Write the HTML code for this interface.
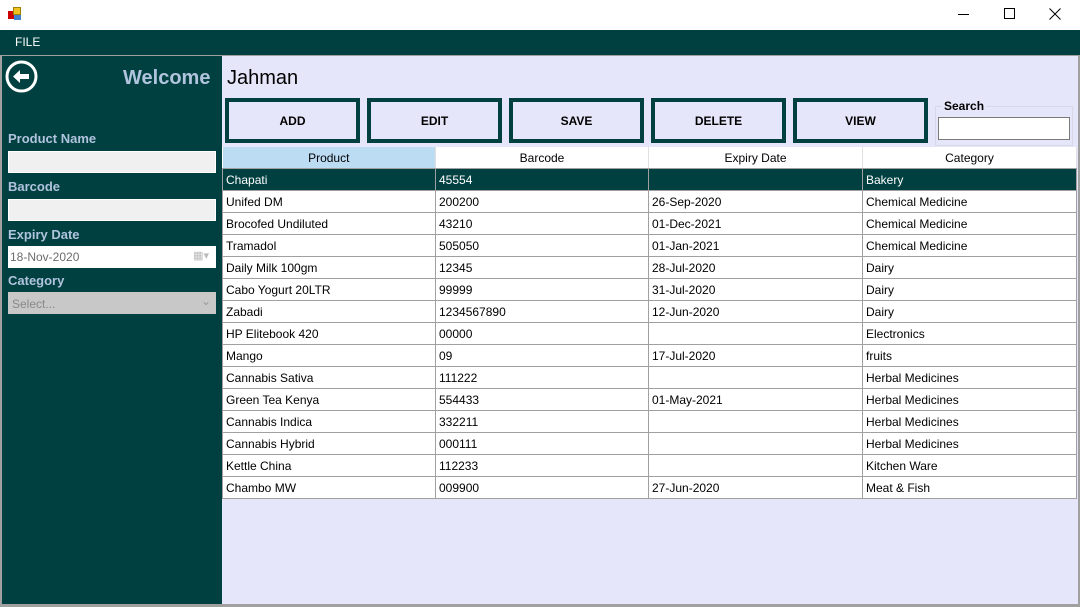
<!DOCTYPE html>
<html><head><style>
*{margin:0;padding:0;box-sizing:border-box}
body{width:1080px;height:607px;position:relative;background:#fff;font-family:"Liberation Sans",sans-serif;overflow:hidden}
.a{position:absolute}
.teal{background:#004040}
.lbl{position:absolute;left:8px;color:#b0c4de;font-weight:bold;font-size:13px}
.box{position:absolute;left:8px;width:208px;height:22px;background:#f0f0f0;border:1px solid #fff}
.btn{position:absolute;top:98px;width:135px;height:45px;border:4px solid #004040;background:#e6e6fa;font-weight:bold;font-size:12px;text-align:center;line-height:38px}
table{position:absolute;left:222px;top:147px;width:854px;border-collapse:collapse;font-size:12px;table-layout:fixed;background:#fff}
td{height:22px;border:1px solid #a0a0a0;padding:1px 3px 0;white-space:nowrap;overflow:hidden}
th{height:21px;font-weight:normal;border-right:1px solid #e0e0e0;border-bottom:1px solid #a0a0a0;background:#fff;padding-top:1px}
tr.sel td{background:#004040;color:#fff}
</style></head><body>
<div class="a" style="left:8px;top:7px;width:14px;height:14px">
<div class="a" style="left:0;top:4px;width:6px;height:8px;background:#c00"></div>
<div class="a" style="left:5px;top:0;width:8px;height:8px;background:#f0c020;border:1px solid #a08000"></div>
<div class="a" style="left:6px;top:8px;width:7px;height:5px;background:#4080d0"></div></div>
<div class="a" style="left:958px;top:14px;width:11px;height:1px;background:#000"></div>
<div class="a" style="left:1004px;top:8px;width:11px;height:11px;border:1px solid #000"></div>
<svg class="a" style="left:1049px;top:8px" width="12" height="12"><path d="M0.5 0.5L11.5 11.5M11.5 0.5L0.5 11.5" stroke="#000" stroke-width="1"/></svg>
<div class="a teal" style="left:0;top:30px;width:1080px;height:25px"></div>
<div class="a" style="left:15px;top:35px;color:#fff;font-size:12px">FILE</div>
<div class="a" style="left:0;top:55px;width:1080px;height:552px;background:#a0a0a0"></div>
<div class="a teal" style="left:2px;top:56px;width:220px;height:548px"></div>
<div class="a" style="left:222px;top:56px;width:856px;height:548px;background:#e6e6fa"></div>
<svg class="a" style="left:5px;top:60px" width="33" height="33" viewBox="0 0 33 33"><circle cx="16.5" cy="16.5" r="14.5" fill="none" stroke="#fff" stroke-width="3"/><path d="M8 16.5 L15 10 V14 H24 V19 H15 V23 Z" fill="#fff"/></svg>
<div class="a" style="left:123px;top:67px;color:#b0c4de;font-weight:bold;font-size:20px">Welcome</div>
<div class="lbl" style="top:131px">Product Name</div>
<div class="box" style="top:151px"></div>
<div class="lbl" style="top:179px">Barcode</div>
<div class="box" style="top:199px"></div>
<div class="lbl" style="top:227px">Expiry Date</div>
<div class="box" style="top:246px;background:#fff;font-size:12px;color:#6d6d6d;padding:3px 0 0 1px">18-Nov-2020<span style="position:absolute;right:6px;top:2px;color:#bbb;font-size:11px">▦▾</span></div>
<div class="lbl" style="top:273px">Category</div>
<div class="box" style="top:292px;background:#c8c8c8;border-color:#c8c8c8;font-size:12px;color:#888;padding:4px 0 0 3px">Select...<span style="position:absolute;right:4px;top:1px;color:#999">⌄</span></div>
<div class="a" style="left:227px;top:67px;font-size:20px;color:#000">Jahman</div>
<div class="btn" style="left:225px">ADD</div>
<div class="btn" style="left:367px">EDIT</div>
<div class="btn" style="left:509px">SAVE</div>
<div class="btn" style="left:651px">DELETE</div>
<div class="btn" style="left:793px">VIEW</div>
<div class="a" style="left:935px;top:106px;width:138px;height:40px;border:1px solid #d8d8e8"></div>
<div class="a" style="left:942px;top:99px;font-size:12px;font-weight:bold;background:#e6e6fa;padding:0 2px">Search</div>
<div class="a" style="left:938px;top:117px;width:132px;height:23px;background:#fff;border:1px solid #7a7a7a"></div>
<table>
<colgroup><col style="width:213px"><col style="width:213px"><col style="width:214px"><col style="width:214px"></colgroup>
<tr><th style="background:#bcdcf4">Product</th><th>Barcode</th><th>Expiry Date</th><th>Category</th></tr>
<tr class="sel"><td>Chapati</td><td>45554</td><td></td><td>Bakery</td></tr>
<tr><td>Unifed DM</td><td>200200</td><td>26-Sep-2020</td><td>Chemical Medicine</td></tr>
<tr><td>Brocofed Undiluted</td><td>43210</td><td>01-Dec-2021</td><td>Chemical Medicine</td></tr>
<tr><td>Tramadol</td><td>505050</td><td>01-Jan-2021</td><td>Chemical Medicine</td></tr>
<tr><td>Daily Milk 100gm</td><td>12345</td><td>28-Jul-2020</td><td>Dairy</td></tr>
<tr><td>Cabo Yogurt 20LTR</td><td>99999</td><td>31-Jul-2020</td><td>Dairy</td></tr>
<tr><td>Zabadi</td><td>1234567890</td><td>12-Jun-2020</td><td>Dairy</td></tr>
<tr><td>HP Elitebook 420</td><td>00000</td><td></td><td>Electronics</td></tr>
<tr><td>Mango</td><td>09</td><td>17-Jul-2020</td><td>fruits</td></tr>
<tr><td>Cannabis Sativa</td><td>111222</td><td></td><td>Herbal Medicines</td></tr>
<tr><td>Green Tea Kenya</td><td>554433</td><td>01-May-2021</td><td>Herbal Medicines</td></tr>
<tr><td>Cannabis Indica</td><td>332211</td><td></td><td>Herbal Medicines</td></tr>
<tr><td>Cannabis Hybrid</td><td>000111</td><td></td><td>Herbal Medicines</td></tr>
<tr><td>Kettle China</td><td>112233</td><td></td><td>Kitchen Ware</td></tr>
<tr><td>Chambo MW</td><td>009900</td><td>27-Jun-2020</td><td>Meat &amp; Fish</td></tr>
</table>
</body></html>
